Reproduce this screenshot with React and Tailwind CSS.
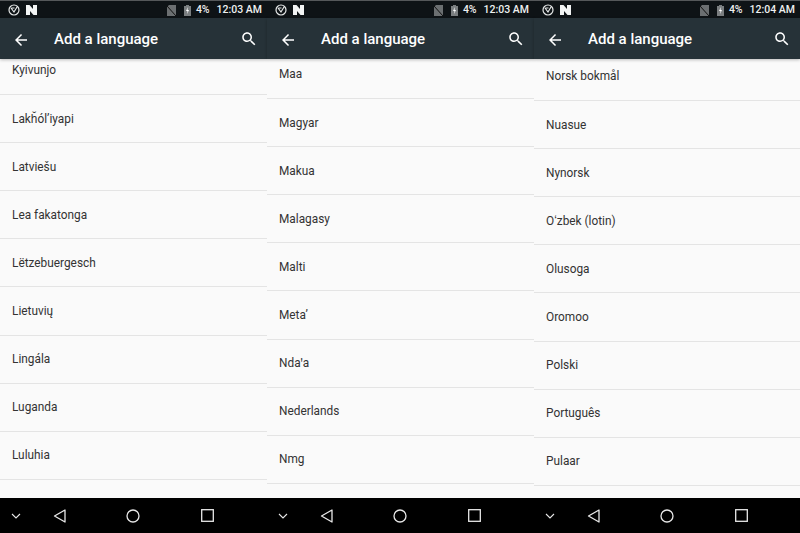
const columns = [
  {
    time: "12:03 AM",
    offset: "-mt-[12px]",
    width: "w-[267px]",
    items: ["Kyivunjo", "Lakȟólʼiyapi", "Latviešu", "Lea fakatonga", "Lëtzebuergesch", "Lietuvių", "Lingála", "Luganda", "Luluhia"],
  },
  {
    time: "12:03 AM",
    offset: "-mt-[8px]",
    width: "w-[267px]",
    items: ["Maa", "Magyar", "Makua", "Malagasy", "Malti", "Metaʼ", "Ndaꞌa", "Nederlands", "Nmg"],
  },
  {
    time: "12:04 AM",
    offset: "-mt-[6px]",
    width: "w-[266px]",
    items: ["Norsk bokmål", "Nuasue", "Nynorsk", "Oʻzbek (lotin)", "Olusoga", "Oromoo", "Polski", "Português", "Pulaar"],
  },
];

function StatusBar({ time }) {
  return (
    <div className="h-[18px] flex items-center pl-[8px] pr-[5px] pt-[1px] bg-[#0e1316] border-t border-[#55585a] text-[#eef0f0]">
      <svg width="12" height="12" viewBox="0 0 12 12" fill="none" stroke="#e6e8e8">
        <circle cx="6" cy="6" r="5" strokeWidth="1.2" />
        <path d="M3 4l3 4 3-5M3.5 4h3" strokeWidth="1.2" />
      </svg>
      <svg className="ml-[6px]" width="11" height="10" viewBox="0 0 11 10" fill="#f2f4f4">
        <path d="M0 0h3.500l3.500 4V0h4v10H7.500L4 6v4H0z" />
      </svg>
      <svg className="ml-auto" width="9" height="11" viewBox="0 0 9 11">
        <path d="M2 0h7v11H0V2z" fill="#6b6f71" />
        <path d="M0 1l9 10" stroke="#111" strokeWidth="1" />
      </svg>
      <svg className="ml-[8px]" width="7" height="11" viewBox="0 0 7 11">
        <path d="M2 0h3v1h2v10H0V1h2z" fill="#7a7e80" />
        <path d="M4 2L2 6h1.500L3 9l2-4H3.500z" fill="#fff" />
      </svg>
      <span className="ml-[5px] font-['Roboto',sans-serif] font-medium text-[10.5px] leading-none">4%</span>
      <span className="ml-[7px] font-['Roboto',sans-serif] font-medium text-[10.5px] leading-none">{time}</span>
    </div>
  );
}

function Toolbar() {
  return (
    <div className="h-[41px] flex items-center pl-[12px] pr-[9px] pt-[2px] bg-[#263238] text-white shadow-[0_1px_3px_rgba(0,0,0,0.25)] relative z-10">
      <svg width="18" height="18" viewBox="0 0 24 24" fill="currentColor">
        <path d="M20 11H7.830l5.590-5.590L12 4l-8 8 8 8 1.410-1.410L7.830 13H20v-2z" />
      </svg>
      <span className="ml-[24px] font-['Roboto',sans-serif] font-medium text-[15px]">Add a language</span>
      <svg className="ml-auto -mt-[2px]" width="18" height="18" viewBox="0 0 24 24" fill="currentColor">
        <path d="M15.500 14h-.79l-.28-.27C15.410 12.590 16 11.110 16 9.500 16 5.910 13.090 3 9.500 3S3 5.910 3 9.500 5.910 16 9.500 16c1.610 0 3.090-.59 4.230-1.570l.27.28v.79l5 4.990L20.490 19l-4.990-5zm-6 0C7.010 14 5 11.990 5 9.500S7.010 5 9.500 5 14 7.010 14 9.500 11.990 14 9.500 14z" />
      </svg>
    </div>
  );
}

function NavBar() {
  return (
    <div className="h-[35px] flex items-center bg-black pl-[11px] text-[#e8e8e8]">
      <svg width="10" height="6" viewBox="0 0 10 6" fill="none" stroke="currentColor" strokeWidth="1.100">
        <path d="M1 1l4 4 4-4" />
      </svg>
      <svg className="ml-[32px]" width="13" height="14" viewBox="0 0 13 14" fill="none" stroke="currentColor" strokeWidth="1.300">
        <path d="M12 1v12L1.500 7z" strokeLinejoin="round" />
      </svg>
      <svg className="ml-[60px]" width="14" height="14" viewBox="0 0 14 14" fill="none" stroke="currentColor" strokeWidth="1.300">
        <circle cx="7" cy="7" r="6" />
      </svg>
      <svg className="ml-[61px]" width="13" height="13" viewBox="0 0 13 13" fill="none" stroke="currentColor" strokeWidth="1.300">
        <rect x="0.700" y="0.700" width="11.600" height="11.600" />
      </svg>
    </div>
  );
}

function Phone({ time, offset, width, items }) {
  return (
    <div className={`${width} h-[533px] flex flex-col`}>
      <StatusBar time={time} />
      <Toolbar />
      <div className="flex-1 overflow-hidden bg-[#fafafa]">
        <div className={offset}>
          {items.map((name) => (
            <div
              key={name}
              className="h-[48.100px] flex items-center pl-[12px] pt-[1.600px] border-b border-[#e4e4e4] font-['Roboto',sans-serif] text-[11.85px] text-[#333333]"
            >
              {name}
            </div>
          ))}
        </div>
      </div>
      <NavBar />
    </div>
  );
}

export default function App() {
  return (
    <div className="w-[800px] h-[533px] flex overflow-hidden bg-[#fafafa]">
      {columns.map((col) => (
        <Phone key={col.offset} {...col} />
      ))}
    </div>
  );
}
